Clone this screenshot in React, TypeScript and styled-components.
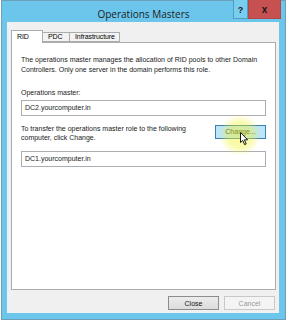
import React from 'react';
import styled, { createGlobalStyle } from 'styled-components';

const GlobalStyle = createGlobalStyle`
  html, body {
    margin: 0;
    padding: 0;
    background: #fff;
  }
  body {
    font-family: 'Liberation Sans', Arial, sans-serif;
    color: #000;
  }
`;

const Page = styled.div`
  padding: 0 0 0 1px;
  width: 291px;
  height: 324px;
  box-sizing: border-box;
`;

const Window = styled.div`
  position: relative;
  box-sizing: border-box;
  width: 285px;
  height: 320px;
  display: flex;
  flex-direction: column;
  background: #6cc6ec;
  border: 1px solid #6f9fb8;
  padding: 0 6px 6px 5px;
`;

const TitleBar = styled.div`
  height: 21px;
  display: grid;
  grid-template-columns: 1fr auto 1fr;
  margin: 0 -6px 0 -5px;
`;

const Title = styled.div`
  grid-column: 2;
  font-family: 'Open Sans', 'Noto Sans', sans-serif;
  font-size: 10px;
  line-height: 26px;
  color: #1e1e1e;
  white-space: nowrap;
`;

const Controls = styled.div`
  grid-column: 3;
  justify-self: end;
  align-self: start;
  display: flex;
  margin: -1px 4px 0 0;
`;

const CaptionButton = styled.div<{ $close?: boolean }>`
  height: 19px;
  width: ${(p) => (p.$close ? '33px' : '15px')};
  box-sizing: border-box;
  display: flex;
  align-items: center;
  justify-content: center;
  padding-top: 1px;
  font-family: 'Liberation Sans', Arial, sans-serif;
  font-weight: 700;
  font-size: ${(p) => (p.$close ? '10px' : '9px')};
  color: #1a1a1a;
  background: ${(p) => (p.$close ? '#c75050' : '#79cdef')};
  border: 1px solid ${(p) => (p.$close ? '#b04848' : '#4f9dc4')};
  border-top: none;
`;

const Client = styled.div`
  flex: 1;
  display: flex;
  flex-direction: column;
  background: #f0f0f0;
  padding: 8px 3px 3px 4px;
`;

const TabStrip = styled.div`
  height: 12px;
  display: flex;
  align-items: flex-end;
  position: relative;
  z-index: 1;
`;

const Tab = styled.div<{ $active?: boolean; $w: number }>`
  box-sizing: border-box;
  width: ${(p) => p.$w}px;
  height: ${(p) => (p.$active ? '13px' : '10px')};
  margin-bottom: ${(p) => (p.$active ? '-1px' : '0')};
  background: ${(p) => (p.$active ? '#fff' : '#f3f3f3')};
  border: 1px solid #acacac;
  border-bottom: ${(p) => (p.$active ? 'none' : '1px solid #acacac')};
  margin-right: -1px;
  font-size: 7px;
  letter-spacing: -0.1px;
  line-height: ${(p) => (p.$active ? '11px' : '8px')};
  padding-left: 5px;
  color: #000;
  white-space: nowrap;
`;

const Panel = styled.div`
  flex: 1;
  background: #fff;
  border: 1px solid #acacac;
  padding: 12px 9px 0 9px;
  display: flex;
  flex-direction: column;
`;

const Text = styled.div`
  font-size: 7px;
  line-height: 9.5px;
  color: #1a1a1a;
  white-space: nowrap;
`;

const Label = styled(Text)`
  margin-top: 14px;
`;

const Field = styled.div<{ $gap: number }>`
  box-sizing: border-box;
  height: 16px;
  border: 1px solid #abadb3;
  background: #fff;
  padding-left: 3px;
  font-size: 7px;
  line-height: 14px;
  color: #1a1a1a;
  margin-top: ${(p) => p.$gap}px;
`;

const TransferRow = styled.div`
  display: flex;
  justify-content: space-between;
  align-items: flex-start;
  margin-top: 8px;
  position: relative;
`;

const PushButton = styled.div<{ $variant?: 'hover' | 'default' | 'disabled' }>`
  box-sizing: border-box;
  width: 51px;
  height: 14px;
  display: flex;
  align-items: center;
  justify-content: center;
  font-size: 7px;
  border: 1px solid
    ${(p) =>
      p.$variant === 'hover'
        ? '#3c7fb1'
        : p.$variant === 'disabled'
        ? '#c8c8c8'
        : '#8d8d8d'};
  background: ${(p) =>
    p.$variant === 'hover'
      ? '#bde5f8'
      : p.$variant === 'disabled'
      ? '#f4f4f4'
      : 'linear-gradient(#ececec, #dcdcdc)'};
  color: ${(p) => (p.$variant === 'disabled' ? '#9a9a9a' : '#111')};
`;

const ChangeButton = styled(PushButton)`
  margin-top: 1px;
  color: #2e3020;
`;

const Glow = styled.div`
  position: absolute;
  right: 5px;
  top: -10px;
  width: 42px;
  height: 42px;
  border-radius: 50%;
  background: radial-gradient(
    circle,
    rgba(244, 242, 40, 0.5) 0%,
    rgba(244, 242, 40, 0.38) 42%,
    rgba(244, 242, 40, 0) 70%
  );
  pointer-events: none;
  z-index: 2;
`;

const Cursor = styled.svg`
  position: absolute;
  right: 17px;
  top: 8px;
  z-index: 3;
`;

const Spacer = styled.div`
  flex: 1;
`;

const ButtonRow = styled.div`
  display: flex;
  justify-content: flex-end;
  gap: 5px;
  margin-top: 6px;
  padding-right: 1px;
`;

export default function App() {
  return (
    <>
      <GlobalStyle />
      <Page>
        <Window>
          <TitleBar>
            <Title>Operations Masters</Title>
            <Controls>
              <CaptionButton>?</CaptionButton>
              <CaptionButton $close>x</CaptionButton>
            </Controls>
          </TitleBar>
          <Client>
            <TabStrip>
              <Tab $active $w={32}>
                RID
              </Tab>
              <Tab $w={28}>PDC</Tab>
              <Tab $w={51}>Infrastructure</Tab>
            </TabStrip>
            <Panel>
              <Text>
                The operations master manages the allocation of RID pools to other Domain
                <br />
                Controllers. Only one server in the domain performs this role.
              </Text>
              <Label>Operations master:</Label>
              <Field $gap={2}>DC2.yourcomputer.in</Field>
              <TransferRow>
                <Text>
                  To transfer the operations master role to the following
                  <br />
                  computer, click Change.
                </Text>
                <ChangeButton $variant="hover">Change...</ChangeButton>
                <Glow />
                <Cursor width="9" height="14" viewBox="0 0 9 14">
                  <path
                    d="M0.5 0.5 L0.5 10.5 L2.8 8.4 L4.6 12.6 L6.2 11.9 L4.4 7.8 L7.6 7.8 Z"
                    fill="#fff"
                    stroke="#000"
                    strokeWidth="0.9"
                    strokeLinejoin="round"
                  />
                </Cursor>
              </TransferRow>
              <Field $gap={8}>DC1.yourcomputer.in</Field>
              <Spacer />
            </Panel>
            <ButtonRow>
              <PushButton $variant="default">Close</PushButton>
              <PushButton $variant="disabled">Cancel</PushButton>
            </ButtonRow>
          </Client>
        </Window>
      </Page>
    </>
  );
}
